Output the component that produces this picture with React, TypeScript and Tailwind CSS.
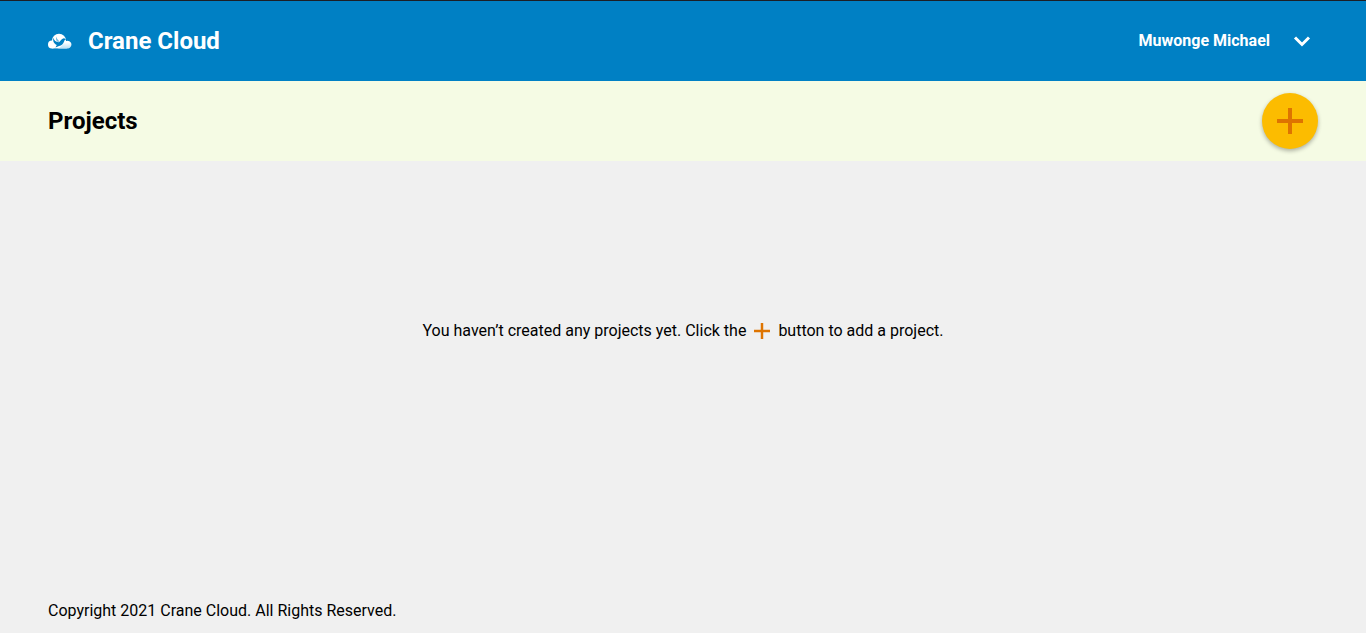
function CloudLogo() {
  return (
    <svg viewBox="0 0 24 24" className="size-6" aria-hidden="true">
      <defs>
        <linearGradient id="puff" x1="0" y1="0" x2="0" y2="1">
          <stop offset="0.2" stopColor="#ffffff" />
          <stop offset="1" stopColor="#b9dff4" />
        </linearGradient>
      </defs>
      <g fill="#ffffff">
        <circle cx="3.900" cy="15.500" r="3.900" />
        <circle cx="11" cy="11.800" r="7" />
        <path d="M3.900 12h15v7.400h-15Z" />
      </g>
      <path
        d="M9.500 19.400c3-.4 4-2.400 5.400-4.400a4.600 4.600 0 0 1 8.100-1.200 3.900 3.900 0 0 1-2.800 5.600Z"
        fill="url(#puff)"
      />
      <path
        d="M5.400 8.800C6 11.500 7.800 13.200 10.800 13.200 12.300 12.600 13.300 9.500 16 9.200l2.200 1c-1.200.3-1.700 1-2 2-.8 2.500-2.700 4.300-5.200 4.700L7.400 18.400 8.800 16C6 15 4.600 12 5.400 8.800Z"
        fill="#0080c4"
      />
      <path d="M8.400 7.400c.2 1.800 1 2.900 2 3.800l1.200 1.800-2.400-.6C8 11.300 7.700 9.300 8.400 7.400Z" fill="#6db9e0" />
    </svg>
  );
}

function Plus({ className }: { className: string }) {
  return (
    <svg viewBox="0 0 26 26" className={className} fill="#de7400" aria-hidden="true">
      <path d="M11 0h4v11h11v4H15v11h-4V15H0v-4h11Z" />
    </svg>
  );
}

export default function App() {
  return (
    <div className="flex min-h-screen flex-col border-t border-[#1c1f26] bg-[#f0f0f0] font-['Roboto',sans-serif] text-base text-black">
      <header className="flex h-20 items-center justify-between bg-[#0080c4] px-12 text-white">
        <a href="#home" className="flex items-center gap-4 text-2xl font-bold">
          <CloudLogo />
          Crane Cloud
        </a>
        <button type="button" className="flex items-center gap-4 font-bold">
          Muwonge Michael
          <svg viewBox="0 0 32 32" className="size-8" fill="none" stroke="currentColor" strokeWidth="3" aria-hidden="true">
            <path d="m9 12.500 7 7 7-7" />
          </svg>
        </button>
      </header>
      <section className="flex h-20 items-center justify-between bg-[#f5fbe4] px-12">
        <h1 className="text-2xl font-bold">Projects</h1>
        <button
          type="button"
          aria-label="Add a project"
          className="flex size-14 items-center justify-center rounded-full bg-[#fcbc00] shadow-[0_2px_4px_rgba(0,0,0,0.3)]"
        >
          <Plus className="size-[26px]" />
        </button>
      </section>
      <main className="flex grow flex-col items-center pt-[158px]">
        <p className="flex items-center gap-2">
          You haven’t created any projects yet. Click the
          <Plus className="size-4" />
          button to add a project.
        </p>
      </main>
      <footer className="px-12 pb-[10px]">Copyright 2021 Crane Cloud. All Rights Reserved.</footer>
    </div>
  );
}
